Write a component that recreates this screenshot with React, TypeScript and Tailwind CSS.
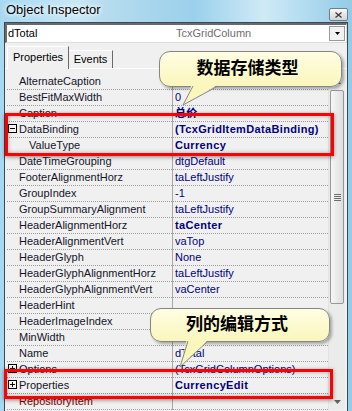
type Row = {
  name: string;
  value?: string;
  bold?: boolean;
  indent?: boolean;
  box?: 'plus' | 'minus';
  link?: boolean;
};

const rows: Row[] = [
  { name: 'AlternateCaption' },
  { name: 'BestFitMaxWidth', value: '0' },
  { name: 'Caption', value: '总价', bold: true },
  { name: 'DataBinding', value: '(TcxGridItemDataBinding)', bold: true, box: 'minus' },
  { name: 'ValueType', value: 'Currency', bold: true, indent: true },
  { name: 'DateTimeGrouping', value: 'dtgDefault' },
  { name: 'FooterAlignmentHorz', value: 'taLeftJustify' },
  { name: 'GroupIndex', value: '-1' },
  { name: 'GroupSummaryAlignment', value: 'taLeftJustify' },
  { name: 'HeaderAlignmentHorz', value: 'taCenter', bold: true },
  { name: 'HeaderAlignmentVert', value: 'vaTop' },
  { name: 'HeaderGlyph', value: 'None' },
  { name: 'HeaderGlyphAlignmentHorz', value: 'taLeftJustify' },
  { name: 'HeaderGlyphAlignmentVert', value: 'vaCenter' },
  { name: 'HeaderHint' },
  { name: 'HeaderImageIndex' },
  { name: 'MinWidth' },
  { name: 'Name', value: 'dTotal' },
  { name: 'Options', value: '(TcxGridColumnOptions)', box: 'plus' },
  { name: 'Properties', value: 'CurrencyEdit', bold: true, box: 'plus' },
  { name: 'RepositoryItem', link: true },
];

function ExpandBox({ kind }: { kind: 'plus' | 'minus' }) {
  return (
    <svg width="9" height="9" viewBox="0 0 9 9" className="absolute left-[1px] top-[2px]">
      <rect x="0.5" y="0.5" width="8" height="8" fill="#f7f7f7" stroke="#000" />
      <path d="M2 4.5h5" stroke="#000" />
      {kind === 'plus' && <path d="M4.5 2v5" stroke="#000" />}
    </svg>
  );
}

function GridRow({ row }: { row: Row }) {
  return (
    <div className="flex h-[16px] pl-[2px]">
      <div className="relative w-[165px] border-b border-dotted border-[#9c9c9c]">
        {row.box && <ExpandBox kind={row.box} />}
        <div
          className={
            (row.indent ? 'pl-[22px] ' : 'pl-[12px] ') +
            (row.link ? 'text-[#800000] ' : 'text-[#14142a] ') +
            'whitespace-nowrap leading-[15px]'
          }
        >
          {row.name}
        </div>
      </div>
      <div className="w-px bg-[#a8a8a8]" />
      <div className="w-[155px] overflow-hidden border-b border-dotted border-[#9c9c9c] pl-[2px]">
        <div
          className={
            (row.bold ? 'font-bold tracking-[0.35px] ' : '') +
            'whitespace-nowrap leading-[15px] text-[#000080]'
          }
        >
          {row.value}
        </div>
      </div>
    </div>
  );
}

function ScrollBar() {
  return (
    <div className="flex w-[17px] flex-col border-l border-[#e3e3e3] bg-[#ebebeb]">
      <div className="flex h-[16px] items-center justify-center">
        <svg width="7" height="4" viewBox="0 0 7 4">
          <path d="M0 4L3.5 0L7 4z" fill="#606060" />
        </svg>
      </div>
      <div className="mx-[1px] flex h-[214px] items-center justify-center rounded-[2px] border border-[#979797] bg-gradient-to-r from-[#f7f7f7] to-[#dedede]">
        <div className="flex flex-col gap-[1px]">
          <div className="h-px w-[7px] bg-[#6f6f6f]" />
          <div className="h-px w-[7px] bg-[#6f6f6f]" />
          <div className="h-px w-[7px] bg-[#6f6f6f]" />
          <div className="h-px w-[7px] bg-[#6f6f6f]" />
        </div>
      </div>
      <div className="flex-1" />
      <div className="flex h-[16px] items-center justify-center">
        <svg width="7" height="4" viewBox="0 0 7 4">
          <path d="M0 0L3.5 4L7 0z" fill="#606060" />
        </svg>
      </div>
    </div>
  );
}

function App() {
  return (
    <div className="relative h-[411px] w-[352px] overflow-hidden bg-[linear-gradient(90deg,#a6d8f1_0%,#c9e8f6_22%,#b6dcee_30%,#9bd0ec_55%,#cfeaf6_75%,#93cbe8_100%)] font-['Liberation_Sans','Noto_Sans_CJK_SC',sans-serif] text-[11px]">
      {/* title bar */}
      <div className="flex h-[22px] items-start justify-between pl-[6px] pr-[4px]">
        <div className="text-[13px] leading-[19px] text-black [text-shadow:0_0_5px_#fff,0_0_5px_#fff]">
          Object Inspector
        </div>
        <div className="mt-[8px] flex h-[13px] w-[19px] items-center justify-center rounded-[2px] border border-[#707c88] bg-gradient-to-b from-[#f8f8f8] to-[#d4d4d4]">
          <svg width="7" height="6" viewBox="0 0 7 6">
            <path d="M0.5 0.5l6 5M6.5 0.5l-6 5" stroke="#3a3a3a" strokeWidth="1.3" />
          </svg>
        </div>
      </div>

      {/* inspector panel */}
      <div className="ml-[4px] h-[389px] w-[344px] border-l border-r border-t border-[#3c4856] bg-[#f0f0f0]">
        {/* combo */}
        <div className="flex h-[20px] items-center border-l-2 border-t-2 border-[#6a6a6a] border-b border-r border-b-[#dcdcdc] border-r-[#dcdcdc] bg-white">
          <span className="w-[169px] pl-[1px] text-black">dTotal</span>
          <span className="flex-1 text-[#6e6e6e]">TcxGridColumn</span>
          <div className="mr-[1px] flex h-[15px] w-[16px] items-center justify-center border border-[#9a9a9a] bg-[#f2f2f2]">
            <svg width="5" height="3" viewBox="0 0 5 3">
              <path d="M0 0L2.5 3L5 0z" fill="#000" />
            </svg>
          </div>
        </div>

        {/* tabs */}
        <div className="mt-[4px] flex h-[22px] items-end border-b border-white pl-[2px]">
          <div className="-mb-px flex h-[23px] w-[62px] items-center justify-center rounded-tl-[2px] border-l border-t border-white border-r border-r-[#696969] bg-[#f0f0f0] pb-[1px] text-black">
            Properties
          </div>
          <div className="flex h-[18px] w-[44px] items-center justify-center border-t border-white border-r border-r-[#696969] text-black">
            Events
          </div>
        </div>

        {/* grid */}
        <div className="mt-[5px] flex">
          <div className="w-[323px]">
            {rows.map((r) => (
              <GridRow key={r.name} row={r} />
            ))}
          </div>
          <ScrollBar />
        </div>
      </div>

      {/* red marks */}
      <div className="absolute left-[5px] top-[113px] h-[43px] w-[329px] border-[3px] border-[#ff0000] shadow-[0_1px_4px_rgba(0,0,0,0.45),inset_0_0_4px_rgba(0,0,0,0.3)]" />
      <div className="absolute left-[4px] top-[369px] h-[30px] w-[329px] border-[3px] border-[#ff0000] shadow-[0_1px_4px_rgba(0,0,0,0.45),inset_0_0_4px_rgba(0,0,0,0.3)]" />

      {/* callout 1 */}
      <div className="absolute left-[159px] top-[51px] flex h-[36px] w-[183px] items-center justify-center rounded-[11px] border border-[#868686] bg-gradient-to-b from-[#fffee2] to-[#faf6bc] pr-[6px] shadow-[2px_2px_3px_rgba(0,0,0,0.3)]">
        <span className="text-[17px] font-bold text-black">数据存储类型</span>
      </div>
      <svg width="40" height="24" viewBox="0 0 40 24" className="absolute left-[180px] top-[84px]">
        <path d="M12 0L3 21L39 0z" fill="#faf6bc" />
        <path d="M13 2L3 21L38 2" fill="none" stroke="#868686" />
      </svg>

      {/* callout 2 */}
      <div className="absolute left-[150px] top-[308px] flex h-[34px] w-[180px] items-center justify-center rounded-[11px] border border-[#868686] bg-gradient-to-b from-[#fffee2] to-[#faf6bc] pr-[6px] shadow-[2px_2px_3px_rgba(0,0,0,0.3)]">
        <span className="text-[17px] font-bold text-black">列的编辑方式</span>
      </div>
      <svg width="36" height="30" viewBox="0 0 36 30" className="absolute left-[176px] top-[339px]">
        <path d="M11 0L4 28L33 0z" fill="#faf6bc" />
        <path d="M12 2L4 28L32 2" fill="none" stroke="#868686" />
      </svg>
    </div>
  );
}

export default App;
